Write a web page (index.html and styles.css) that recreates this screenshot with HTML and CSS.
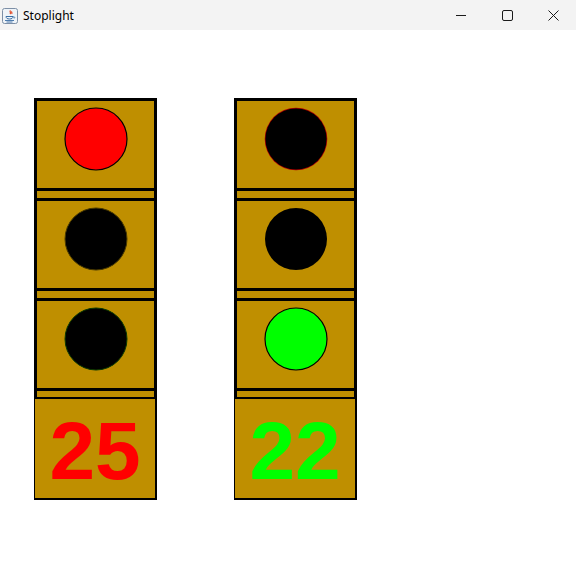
FILE: index.html
```html
<!DOCTYPE html>
<html>
<head>
<meta charset="utf-8">
<title>Stoplight</title>
<link rel="stylesheet" href="styles.css">
</head>
<body>
<div class="titlebar">
  <div class="app">
    <svg class="app-icon" width="16" height="16" viewBox="0 0 16 16">
      <rect x="0.5" y="0.5" width="15" height="15" rx="2" fill="#eef3f8" stroke="#7d8fa6"/>
      <path d="M8.5 2.5c-1.5 1.2 1 2-0.5 3.5M10 3.5c-1 0.8 0.6 1.4-0.4 2.4" fill="none" stroke="#e2411b" stroke-width="1.2"/>
      <path d="M4 8.5h7c0 1.5-1.2 2.5-3.5 2.5S4 10 4 8.5z" fill="none" stroke="#3a6ea5" stroke-width="1"/>
      <path d="M11 9h1.3c0.7 0 0.7 1.2-0.4 1.4" fill="none" stroke="#3a6ea5" stroke-width="0.8"/>
      <path d="M3 12.5h9M4.5 14h6" stroke="#3a6ea5" stroke-width="0.9"/>
    </svg>
    <span class="title">Stoplight</span>
  </div>
  <div class="controls">
    <span class="ctl">
      <svg width="10" height="10" viewBox="0 0 10 10"><path d="M0 5.5h10" stroke="#1a1a1a" stroke-width="1"/></svg>
    </span>
    <span class="ctl">
      <svg width="11" height="11" viewBox="0 0 11 11"><rect x="0.5" y="0.5" width="10" height="10" rx="1.5" fill="none" stroke="#1a1a1a" stroke-width="1"/></svg>
    </span>
    <span class="ctl">
      <svg width="11" height="11" viewBox="0 0 11 11"><path d="M0.5 0.5l10 10M10.5 0.5l-10 10" stroke="#1a1a1a" stroke-width="1"/></svg>
    </span>
  </div>
</div>
<div class="content">
  <div class="signal">
    <div class="lights">
      <div class="lamp-panel">
        <svg class="lamp" width="64" height="64" viewBox="0 0 64 64"><circle cx="32" cy="32" r="31" fill="#ff0000" stroke="#000" stroke-width="1.2"/></svg>
      </div>
      <div class="lamp-panel">
        <svg class="lamp" width="64" height="64" viewBox="0 0 64 64"><circle cx="32" cy="32" r="31" fill="#000" stroke="#4a3a00" stroke-width="1"/></svg>
      </div>
      <div class="lamp-panel">
        <svg class="lamp" width="64" height="64" viewBox="0 0 64 64"><circle cx="32" cy="32" r="31" fill="#000" stroke="#0b3a00" stroke-width="1"/></svg>
      </div>
    </div>
    <div class="counter red">25</div>
  </div>
  <div class="signal">
    <div class="lights">
      <div class="lamp-panel">
        <svg class="lamp" width="64" height="64" viewBox="0 0 64 64"><circle cx="32" cy="32" r="31.3" fill="#b00000"/><circle cx="32" cy="32" r="30.6" fill="#000"/></svg>
      </div>
      <div class="lamp-panel">
        <svg class="lamp" width="64" height="64" viewBox="0 0 64 64"><circle cx="32" cy="32" r="31" fill="#000"/></svg>
      </div>
      <div class="lamp-panel">
        <svg class="lamp" width="64" height="64" viewBox="0 0 64 64"><circle cx="32" cy="32" r="31" fill="#00ff00" stroke="#000" stroke-width="1.2"/></svg>
      </div>
    </div>
    <div class="counter green">22</div>
  </div>
</div>
</body>
</html>
```
FILE: styles.css
```css
html, body {
  margin: 0;
  padding: 0;
  background: #ffffff;
}
body {
  width: 576px;
  height: 588px;
  overflow: hidden;
  font-family: "Segoe UI", "Noto Sans", "Liberation Sans", sans-serif;
}
.titlebar {
  height: 30px;
  background: #f3f3f3;
  display: flex;
  align-items: center;
  justify-content: space-between;
}
.app {
  display: flex;
  align-items: center;
  padding-left: 2px;
  padding-top: 1px;
}
.app-icon {
  display: block;
  margin-top: 1px;
}
.title {
  margin-left: 5px;
  font-size: 12px;
  color: #000;
  line-height: 16px;
}
.controls {
  display: flex;
  height: 30px;
}
.ctl {
  width: 46px;
  height: 30px;
  display: flex;
  align-items: center;
  justify-content: center;
}
.ctl svg {
  display: block;
}
.content {
  display: flex;
  padding-top: 68px;
  padding-left: 34px;
  gap: 77px;
}
.signal {
  width: 123px;
  display: flex;
  flex-direction: column;
}
.lights {
  background: #bf8f00;
  border-left: 3px solid #000;
  border-right: 3px solid #000;
  display: flex;
  flex-direction: column;
  gap: 7px;
  padding-bottom: 6px;
}
.lamp-panel {
  height: 87px;
  border-top: 3px solid #000;
  border-bottom: 3px solid #000;
  display: flex;
  justify-content: center;
  align-items: flex-start;
  padding-top: 6px;
  box-sizing: content-box;
  height: 81px;
}
.lamp {
  display: block;
}
.counter {
  height: 99px;
  background: #bf8f00;
  border-top: 2px solid #000;
  border-right: 2px solid #000;
  border-bottom: 2px solid #000;
  border-left: 1px solid #000;
  font-family: "Liberation Sans", Arial, sans-serif;
  font-weight: bold;
  font-size: 82px;
  line-height: 82px;
  text-align: center;
  padding-top: 11px;
  box-sizing: border-box;
  height: 103px;
}
.red { color: #ff0000; }
.green { color: #00ff00; }
```
